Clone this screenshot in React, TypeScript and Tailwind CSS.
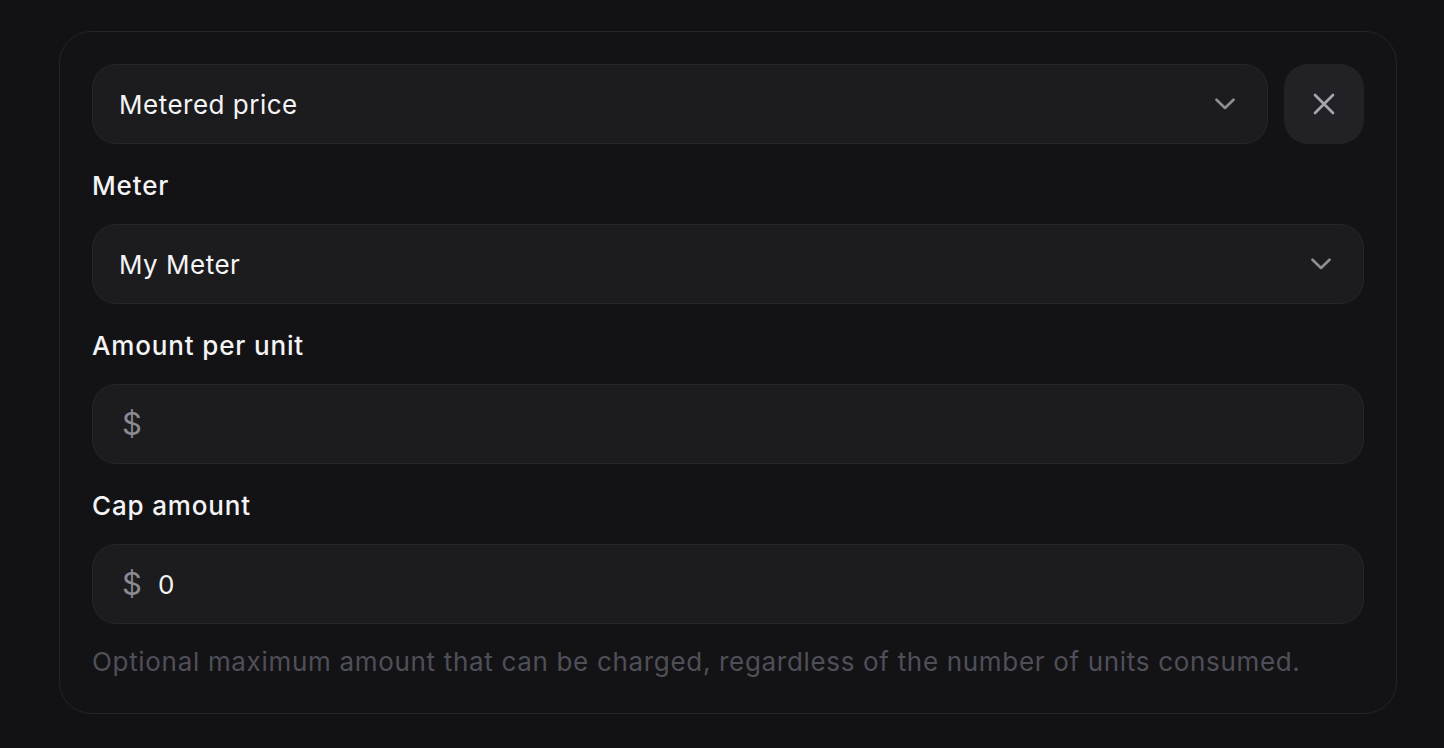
function Chevron() {
  return (
    <svg width="20" height="12" viewBox="0 0 20 12" fill="none" className="shrink-0">
      <path d="M1.5 1.75 10 10l8.5-8.25" stroke="#8e8e96" strokeWidth="2.6" strokeLinecap="round" strokeLinejoin="round" />
    </svg>
  )
}

function Close() {
  return (
    <svg width="22" height="22" viewBox="0 0 22 22" fill="none">
      <path d="M2 2l18 18M20 2 2 20" stroke="#a6a6ae" strokeWidth="2.6" strokeLinecap="round" />
    </svg>
  )
}

function Select({ value }: { value: string }) {
  return (
    <div className="w-full min-w-0 h-[80px] flex items-center justify-between pl-[26px] pr-[32px] rounded-[24px] bg-[#1c1c1f] border border-[#27272b] text-[26px] tracking-[0.5px] text-[#f4f4f5]">
      <span>{value}</span>
      <Chevron />
    </div>
  )
}

function MoneyInput({ value }: { value?: string }) {
  return (
    <div className="h-[80px] flex items-center gap-[16px] pl-[29px] rounded-[24px] bg-[#1c1c1f] border border-[#27272b] text-[26px]">
      <span className="text-[#8a8a91] text-[31px]">$</span>
      {value && <span className="text-[#f4f4f5]">{value}</span>}
    </div>
  )
}

function Field({ label, children }: { label: string; children: React.ReactNode }) {
  return (
    <div className="flex flex-col gap-[20px]">
      <label className="text-[26px] leading-[36px] font-medium tracking-[0.85px] text-[#f4f4f5]">{label}</label>
      {children}
    </div>
  )
}

export default function App() {
  return (
    <div className="min-h-screen bg-[#121214] pl-[59px] pr-[47px] pt-[31px] font-['Inter',sans-serif]">
      <div className="rounded-[32px] border border-[#25252a] bg-[#131316] px-[32px] pt-[32px] pb-[33px] flex flex-col gap-[24px]">
        <div className="flex gap-[16px]">
          <div className="flex-1 min-w-0">
            <Select value="Metered price" />
          </div>
          <button className="w-[80px] h-[80px] shrink-0 rounded-[24px] bg-[#222226] flex items-center justify-center">
            <Close />
          </button>
        </div>
        <Field label="Meter">
          <Select value="My Meter" />
        </Field>
        <Field label="Amount per unit">
          <MoneyInput />
        </Field>
        <div className="flex flex-col gap-[20px]">
          <Field label="Cap amount">
            <MoneyInput value="0" />
          </Field>
          <p className="text-[26px] leading-[36px] tracking-[0.68px] text-[#4f4f58]">
            Optional maximum amount that can be charged, regardless of the number of units consumed.
          </p>
        </div>
      </div>
    </div>
  )
}
